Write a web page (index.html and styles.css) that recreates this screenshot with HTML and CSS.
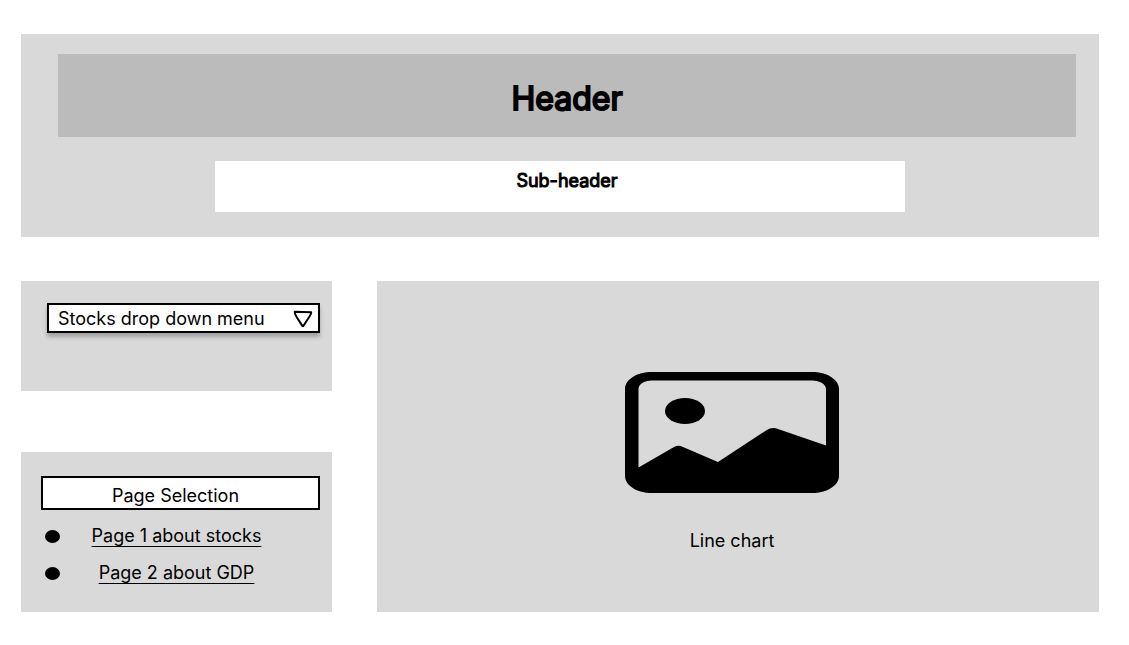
FILE: index.html
```html
<!DOCTYPE html>
<html lang="en">
<head>
<meta charset="utf-8">
<meta name="viewport" content="width=device-width, initial-scale=1">
<title>Stocks wireframe</title>
<link rel="stylesheet" href="styles.css">
</head>
<body>
<div class="page">
  <header class="banner">
    <h1 class="banner-title">Header</h1>
    <h2 class="banner-subtitle">Sub-header</h2>
  </header>
  <div class="content">
    <aside class="sidebar">
      <section class="panel panel-menu">
        <div class="dropdown">
          <select class="dropdown-select" aria-label="Stocks">
            <option>Stocks drop down menu</option>
          </select>
          <svg class="dropdown-arrow" viewBox="0 0 20 18" aria-hidden="true"><path d="M1.7 1.7 18.2 2.2 Q18.4 4 16.5 6.5 L10.3 16 Q9.8 16.5 9.2 15.6 L3.6 7 Q1.5 3.5 1.7 1.7Z"/></svg>
        </div>
      </section>
      <nav class="panel panel-pages" aria-labelledby="pages-title">
        <h3 class="pages-title" id="pages-title">Page Selection</h3>
        <ul class="pages-list">
          <li class="pages-item"><a class="pages-link" href="#stocks">Page 1 about stocks</a></li>
          <li class="pages-item"><a class="pages-link" href="#gdp">Page 2 about GDP</a></li>
        </ul>
      </nav>
    </aside>
    <main class="chart">
      <figure class="chart-figure">
        <svg class="chart-image" viewBox="0 0 214 121" aria-hidden="true">
          <path fill-rule="evenodd" d="M27 0H187C202 0 214 7.5 214 17V104C214 113.5 202 121 187 121H27C12 121 0 113.5 0 104V17C0 7.5 12 0 27 0ZM13.5 95.5 49 75Q53.5 72.5 58 75L93 90 141 58.5Q147 54.5 153 57L201 73.5V17C201 12.5 195 8.5 187 8.5H27C19 8.5 13.5 12.5 13.5 17Z"/>
          <ellipse cx="60" cy="39" rx="20" ry="13"/>
        </svg>
        <figcaption class="chart-caption">Line chart</figcaption>
      </figure>
    </main>
  </div>
</div>
</body>
</html>
```
FILE: styles.css
```css
* {
  box-sizing: border-box;
}

body {
  margin: 0;
  background: #fff;
  color: #000;
  font-family: Inter, "Liberation Sans", sans-serif;
  font-size: 18px;
  line-height: 24px;
}

h1, h2, h3, ul, figure {
  margin: 0;
  padding: 0;
}

.page {
  padding: 34px 30px 33px 21px;
}

.banner {
  padding: 20px 0 25px;
  background: #d9d9d9;
}

.banner-title {
  margin: 0 23px 0 37px;
  padding: 24px 0 17px;
  background: #bbb;
  font-size: 32px;
  font-weight: 400;
  line-height: 42px;
  text-align: center;
  -webkit-text-stroke: 2px #000;
}

.banner-subtitle {
  width: 64%;
  margin: 24px auto 0;
  padding: 8px 0 19px 14px;
  background: #fff;
  font-size: 18px;
  font-weight: 400;
  text-align: center;
  -webkit-text-stroke: 1px #000;
}

.content {
  display: grid;
  grid-template-columns: 311px 1fr;
  gap: 45px;
  margin-top: 44px;
}

.sidebar {
  display: flex;
  flex-direction: column;
  gap: 61px;
}

.panel {
  background: #d9d9d9;
}

.panel-menu {
  padding: 22px 12px 58px 26px;
}

.dropdown {
  position: relative;
}

.dropdown-select {
  display: block;
  width: 100%;
  height: 30px;
  padding: 1px 32px 0 9px;
  border: 2px solid #000;
  border-radius: 0;
  background: #fff;
  box-shadow: 0 4px 4px rgba(0, 0, 0, 0.25);
  color: #000;
  font: inherit;
  appearance: none;
}

.dropdown-arrow {
  position: absolute;
  top: 7px;
  right: 7px;
  width: 20px;
  height: 18px;
  fill: none;
  stroke: #000;
  stroke-width: 2;
  stroke-linejoin: round;
  pointer-events: none;
}

.panel-pages {
  padding: 24px 12px 27px 20px;
}

.pages-title {
  padding: 6px 10px 0 0;
  border: 2px solid #000;
  background: #fff;
  font-size: 18px;
  font-weight: 400;
  text-align: center;
}

.pages-list {
  display: grid;
  gap: 13px;
  margin-top: 14px;
  list-style: none;
}

.pages-item {
  display: grid;
  grid-template-columns: 15px 1fr;
  align-items: center;
  padding: 0 27px 0 4px;
  text-align: center;
}

.pages-item::before {
  width: 15px;
  height: 13px;
  border-radius: 50%;
  background: #000;
  content: "";
}

.pages-link {
  color: #000;
  text-decoration-thickness: 1px;
  text-underline-offset: 4px;
  text-decoration-skip-ink: none;
}

.chart {
  display: flex;
  align-items: center;
  justify-content: center;
  padding: 31px 12px 0 0;
  background: #d9d9d9;
}

.chart-figure {
  display: flex;
  flex-direction: column;
  align-items: center;
  gap: 36px;
}

.chart-image {
  width: 214px;
  height: 121px;
}
```
